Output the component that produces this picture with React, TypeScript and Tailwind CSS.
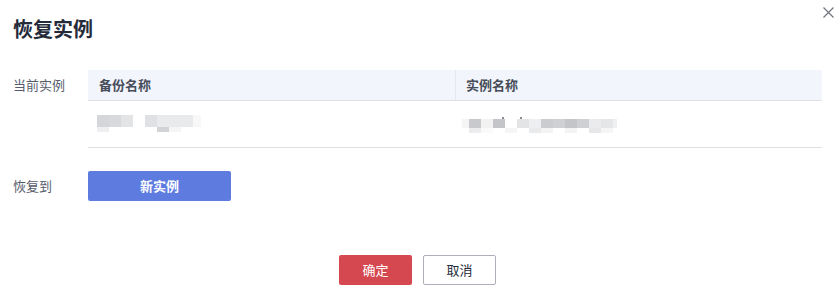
import React from 'react';

type Px = { w: number; c: string };

// pixelated (mosaic) placeholders that hide the real cell values
const leftTop: Px[] = [
  { w: 12, c: '#d5d6da' }, { w: 12, c: '#d8d9dd' }, { w: 12, c: '#e3e4e6' }, { w: 12, c: '#ffffff' },
  { w: 12, c: '#e0e1e4' }, { w: 12, c: '#e9eaec' }, { w: 12, c: '#e9eaec' }, { w: 12, c: '#e9eaec' }, { w: 8, c: '#f8f8f8' },
];
const leftBottom: Px[] = [
  { w: 12, c: '#efeff1' }, { w: 12, c: '#ffffff' }, { w: 12, c: '#ffffff' }, { w: 12, c: '#ffffff' },
  { w: 12, c: '#ffffff' }, { w: 12, c: '#d2d3d7' }, { w: 12, c: '#f5f5f6' },
];
const rightTop: Px[] = [
  { w: 7, c: '#f5f5f5' }, { w: 12, c: '#c8c9cd' }, { w: 12, c: '#f2f2f3' }, { w: 12, c: '#c4c5c9' },
  { w: 12, c: '#ffffff' }, { w: 12, c: '#e3e4e6' }, { w: 12, c: '#eeeff0' }, { w: 12, c: '#cbccd0' },
  { w: 12, c: '#cfd0d4' }, { w: 12, c: '#c4c5c9' }, { w: 12, c: '#cfd0d4' }, { w: 12, c: '#ebebed' },
  { w: 12, c: '#e5e6e8' }, { w: 4, c: '#f0f0f0' },
];
const rightBottom: Px[] = [
  { w: 7, c: '#ffffff' }, { w: 12, c: '#ececee' }, { w: 12, c: '#fafafa' }, { w: 12, c: '#ffffff' },
  { w: 12, c: '#f5f5f5' }, { w: 12, c: '#ffffff' }, { w: 12, c: '#e9eaec' }, { w: 12, c: '#f3f3f4' },
  { w: 12, c: '#ffffff' }, { w: 12, c: '#f3f3f3' }, { w: 12, c: '#ffffff' }, { w: 12, c: '#e7e7e9' },
  { w: 12, c: '#f5f5f5' },
];

const Mosaic: React.FC<{ top: Px[]; bottom: Px[]; topH: number }> = ({ top, bottom, topH }) => (
  <div className="flex flex-col">
    <div className="flex">
      {top.map((p, i) => (
        <div key={i} style={{ width: p.w, height: topH, background: p.c }} />
      ))}
    </div>
    <div className="flex">
      {bottom.map((p, i) => (
        <div key={i} style={{ width: p.w, height: 5, background: p.c }} />
      ))}
    </div>
  </div>
);

const App: React.FC = () => {
  return (
    <div
      className="relative w-[840px] h-[301px] bg-white text-[#252b3a] overflow-hidden"
      style={{ fontFamily: '"Noto Sans CJK SC", "Noto Sans", sans-serif' }}
    >
      {/* close */}
      <button className="absolute left-[822px] top-[6px] w-[12px] h-[12px] flex items-center justify-center">
        <svg width="11" height="11" viewBox="0 0 11 11" fill="none">
          <path d="M0.5 0.5L10.5 10.5M10.5 0.5L0.5 10.5" stroke="#71757f" strokeWidth="1.2" />
        </svg>
      </button>

      <h1 className="pl-[13px] pt-[14px] text-[20px] leading-[30px] font-bold text-[#252b3a]">恢复实例</h1>

      <div className="flex mt-[26px]">
        <div className="w-[88px] shrink-0 pl-[13px] h-[30px] flex items-center text-[13px] text-[#575d6c]">当前实例</div>
        <div className="w-[734px]">
          <div className="grid grid-cols-2 h-[31px] bg-[#f2f5fc] border-b border-[#dfe1e6] text-[13px] font-bold text-[#464c59]">
            <div className="flex items-center pl-[11px]">备份名称</div>
            <div className="flex items-center pl-[10px] border-l border-[#e4e7ef]">实例名称</div>
          </div>
          <div className="grid grid-cols-2 h-[47px] border-b border-[#dfe1e6]">
            <div className="pl-[9px] pt-[14px]">
              <Mosaic top={leftTop} bottom={leftBottom} topH={12} />
            </div>
            <div className="pl-[7px] pt-[18px] relative">
              <div className="absolute left-[47px] top-[16px] w-[2px] h-[2px] bg-[#8a8d94]" />
              <div className="absolute left-[65px] top-[16px] w-[2px] h-[2px] bg-[#8a8d94]" />
              <Mosaic top={rightTop} bottom={rightBottom} topH={9} />
            </div>
          </div>
        </div>
      </div>

      <div className="flex items-center mt-[23px]">
        <div className="w-[88px] pl-[13px] text-[13px] text-[#575d6c]">恢复到</div>
        <button className="w-[143px] h-[30px] bg-[#5e7ce0] text-white text-[13px] font-bold rounded-[2px]">
          新实例
        </button>
      </div>

      <div className="flex justify-center gap-[11px] mt-[54px] pr-[5px]">
        <button className="w-[73px] h-[30px] bg-[#d6484f] text-white text-[13px] rounded-[2px]">确定</button>
        <button className="w-[73px] h-[30px] bg-white border border-[#adb0b8] text-[#252b3a] text-[13px] rounded-[2px]">
          取消
        </button>
      </div>
    </div>
  );
};

export default App;
